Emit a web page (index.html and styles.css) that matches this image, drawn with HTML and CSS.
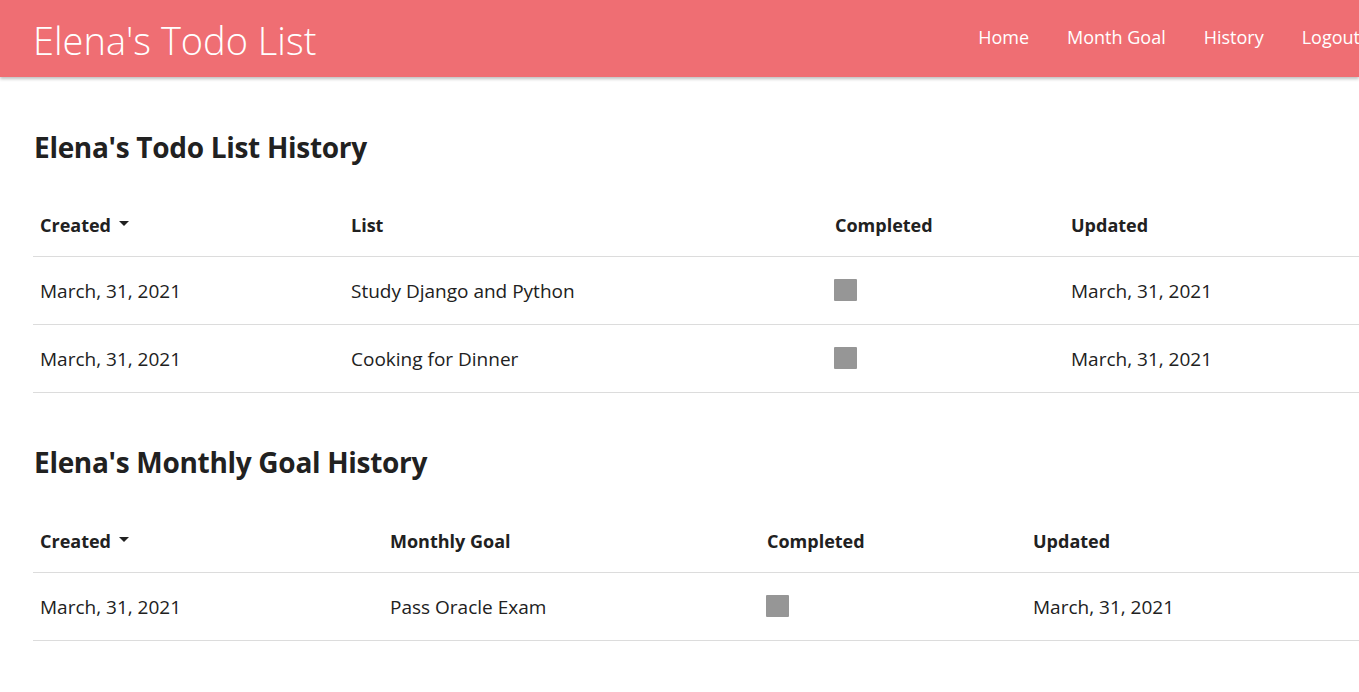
FILE: index.html
```html
<!DOCTYPE html>
<html lang="en">
<head>
<meta charset="utf-8">
<title>Elena's Todo List History</title>
<link rel="stylesheet" href="styles.css">
</head>
<body>
<header class="navbar">
  <a class="brand" href="#">Elena's Todo List</a>
  <nav class="nav">
    <a href="#">Home</a>
    <a href="#">Month Goal</a>
    <a href="#">History</a>
    <a href="#">Logout</a>
  </nav>
</header>
<main class="container">
  <h2 class="section-title">Elena's Todo List History</h2>
  <table class="history t1">
    <colgroup><col class="c1"><col class="c2"><col class="c3"><col></colgroup>
    <thead>
      <tr><th>Created <span class="caret"></span></th><th>List</th><th>Completed</th><th>Updated</th></tr>
    </thead>
    <tbody>
      <tr><td>March, 31, 2021</td><td>Study Django and Python</td><td><span class="box"></span></td><td>March, 31, 2021</td></tr>
      <tr><td>March, 31, 2021</td><td>Cooking for Dinner</td><td><span class="box"></span></td><td>March, 31, 2021</td></tr>
    </tbody>
  </table>
  <h2 class="section-title second">Elena's Monthly Goal History</h2>
  <table class="history t2">
    <colgroup><col class="c1"><col class="c2"><col class="c3"><col></colgroup>
    <thead>
      <tr><th>Created <span class="caret"></span></th><th>Monthly Goal</th><th>Completed</th><th>Updated</th></tr>
    </thead>
    <tbody>
      <tr><td>March, 31, 2021</td><td>Pass Oracle Exam</td><td><span class="box"></span></td><td>March, 31, 2021</td></tr>
    </tbody>
  </table>
</main>
</body>
</html>
```
FILE: styles.css
```css
html, body {
  margin: 0;
  padding: 0;
  overflow: hidden;
}
body {
  font-family: "Open Sans", "Noto Sans", sans-serif;
  color: #212121;
  background: #fff;
  width: 1359px;
}
a { text-decoration: none; }
.navbar {
  height: 77px;
  background: #ef6e73;
  display: flex;
  align-items: center;
  box-shadow: 0 2px 3px rgba(0,0,0,0.25);
  position: relative;
  white-space: nowrap;
}
.brand {
  color: #fff;
  font-size: 38px;
  font-weight: 300;
  margin-left: 33px;
  margin-top: 2px;
}
.nav {
  display: flex;
  margin-left: auto;
  margin-right: -20px;
  margin-top: -3px;
}
.nav a {
  color: #fff;
  font-size: 18px;
  padding: 0 19px;
}
.container {
  padding-left: 33px;
}
.section-title {
  font-size: 28px;
  font-weight: 700;
  margin: 53px 0 0 1px;
  line-height: 34px;
  letter-spacing: -0.3px;
}
.section-title.second {
  margin-top: 52px;
}
.history {
  border-collapse: collapse;
  width: 1340px;
  margin-top: 30px;
  font-size: 19px;
}
.history.t2 {
  margin-top: 31px;
}
.history th {
  text-align: left;
  font-weight: 700;
  font-size: 18px;
  height: 62px;
  padding: 0 7px;
  vertical-align: middle;
  border-bottom: 1px solid #dcdcdc;
}
.history td {
  height: 67px;
  padding: 0 7px;
  vertical-align: middle;
  border-bottom: 1px solid #dcdcdc;
}
.t1 .c1 { width: 311px; }
.t1 .c2 { width: 484px; }
.t1 .c3 { width: 236px; }
.t2 .c1 { width: 350px; }
.t2 .c2 { width: 377px; }
.t2 .c3 { width: 266px; }
.caret {
  display: inline-block;
  width: 0;
  height: 0;
  border-left: 5px solid transparent;
  border-right: 5px solid transparent;
  border-top: 5px solid #212121;
  vertical-align: middle;
  margin-left: 3px;
  margin-top: -8px;
}
.box {
  display: block;
  width: 23px;
  height: 22px;
  background: #969696;
  border-radius: 1px;
  margin-top: -2px;
  margin-left: -1px;
}
```
